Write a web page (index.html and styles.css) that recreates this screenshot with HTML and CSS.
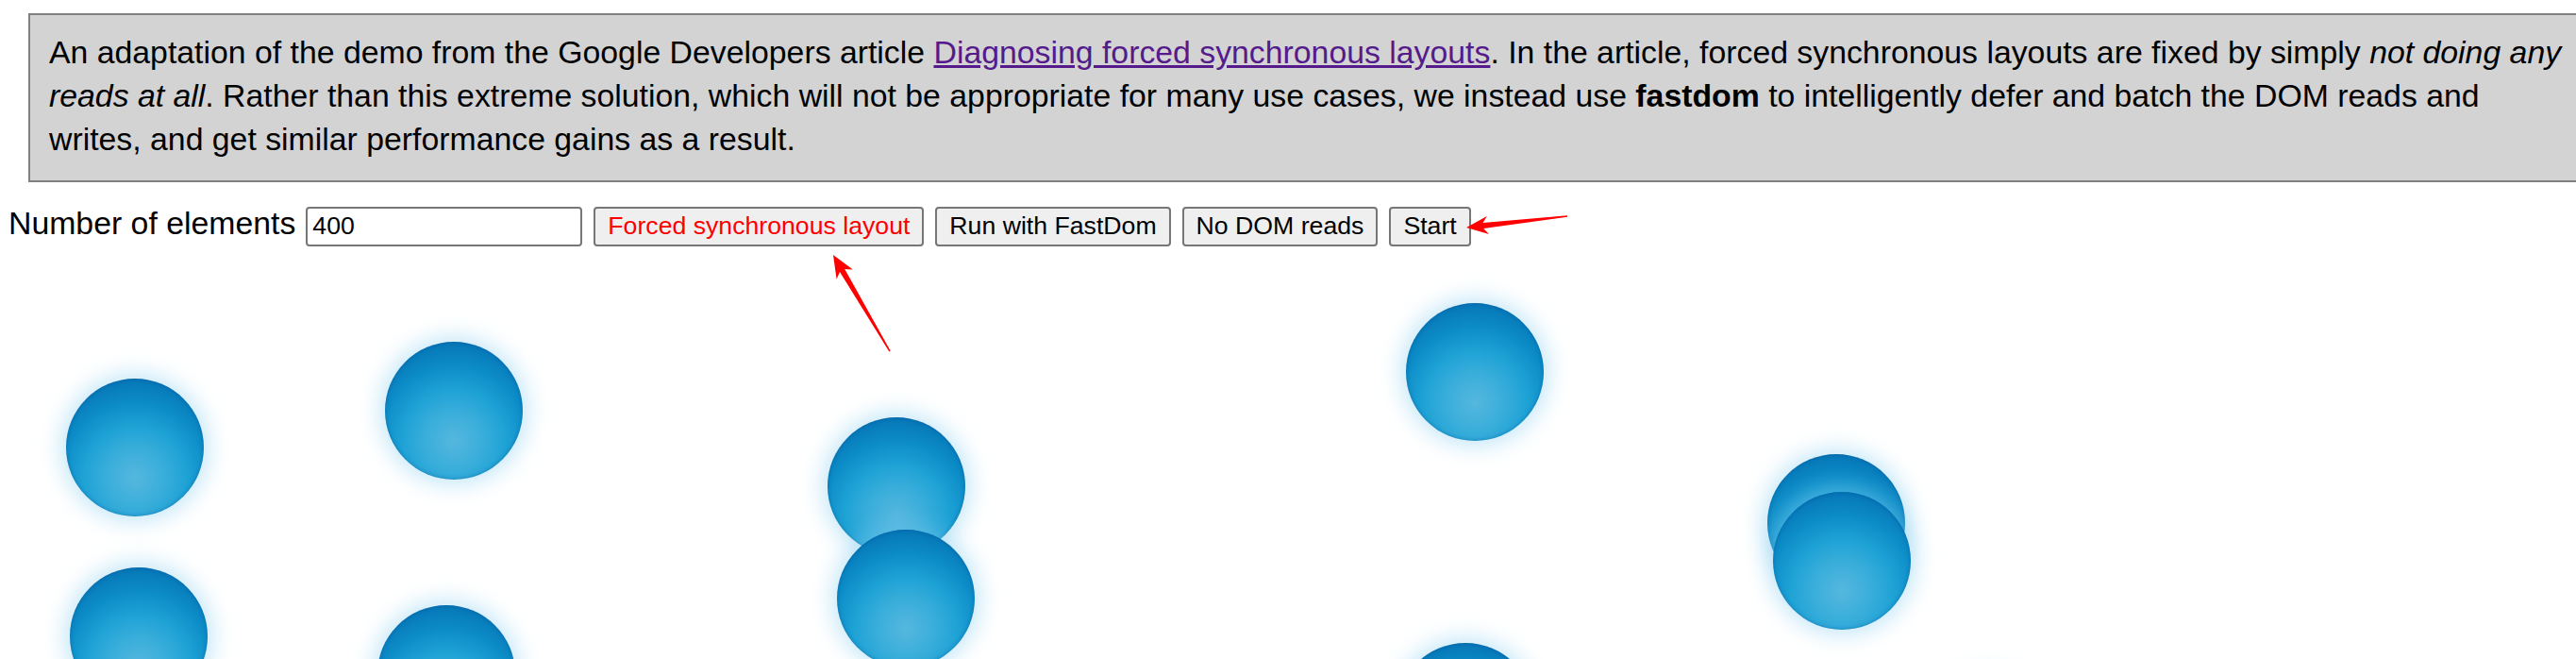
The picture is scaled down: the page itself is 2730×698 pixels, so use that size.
FILE: index.html
```html
<!DOCTYPE html>
<html lang="en">
<head>
<meta charset="utf-8">
<title>FastDom animation demo</title>
<link rel="stylesheet" href="styles.css">
</head>
<body>
<div class="intro">An adaptation of the demo from the Google Developers article <a class="intro-link" href="#">Diagnosing forced synchronous layouts</a>. In the article, forced synchronous layouts are fixed by simply <em>not doing any<br>reads at all</em>. Rather than this extreme solution, which will not be appropriate for many use cases, we instead use <strong>fastdom</strong> to intelligently defer and batch the DOM reads and<br>writes, and get similar performance gains as a result.</div>

<div class="controls">
  <label class="count-label" for="count">Number of elements</label>
  <input class="count-input" id="count" type="text" value="400">
  <button class="btn btn-forced" type="button">Forced synchronous layout</button>
  <button class="btn" type="button">Run with FastDom</button>
  <button class="btn" type="button">No DOM reads</button>
  <button class="btn" type="button">Start</button>
</div>

<div class="stage">
  <div class="ball" style="left:70px;top:140px"></div>
  <div class="ball" style="left:408px;top:101px"></div>
  <div class="ball" style="left:877px;top:181px"></div>
  <div class="ball" style="left:887px;top:300px"></div>
  <div class="ball" style="left:74px;top:340px"></div>
  <div class="ball" style="left:400px;top:380px"></div>
  <div class="ball" style="left:1490px;top:60px"></div>
  <div class="ball" style="left:1873px;top:220px"></div>
  <div class="ball" style="left:1879px;top:260px"></div>
  <div class="ball" style="left:1480px;top:420px"></div>
  <div class="ball" style="left:2034px;top:457px"></div>
</div>

<svg class="annotations" width="2730" height="698" viewBox="0 0 2730 698" aria-hidden="true">
  <polygon fill="#ff0000" points="883,270 903.8,285.6 895.2,284.9 943.6,371.6 942.4,372.4 890.0,287.9 886.6,295.8"/>
  <polygon fill="#ff0000" points="1554,241 1575.8,229.0 1571.6,236.0 1660.9,228.3 1661.1,229.7 1572.2,242.0 1577.9,247.9"/>
</svg>
</body>
</html>
```

FILE: styles.css
```css
html,
body {
  margin: 0;
  padding: 0;
  overflow: hidden;
  background: #ffffff;
}

body {
  position: relative;
  width: 2730px;
  height: 698px;
  font-family: "Liberation Sans", Arial, Helvetica, sans-serif;
  color: #000000;
}

.intro {
  box-sizing: content-box;
  width: 2700px;
  margin: 14px 0 0 30px;
  padding: 16px 20px 21px;
  border: 2px solid #808080;
  background: #d3d3d3;
  font-size: 33.8px;
  line-height: 46px;
  white-space: nowrap;
}

.intro-link {
  color: #551a8b;
  text-decoration: underline;
}

.controls {
  display: flex;
  align-items: baseline;
  gap: 12px;
  margin-top: 24px;
  padding-left: 9px;
}

.count-label {
  font-size: 33.8px;
  margin-right: -1px;
}

.count-input {
  box-sizing: border-box;
  width: 293px;
  height: 42px;
  margin: 0;
  padding: 0 5px;
  border: 2px solid #767676;
  border-radius: 4px;
  background: #ffffff;
  font-family: "Liberation Sans", Arial, sans-serif;
  font-size: 26.67px;
  color: #000000;
}

.btn {
  box-sizing: border-box;
  height: 42px;
  margin: 0;
  padding: 0 13px;
  border: 2px solid #767676;
  border-radius: 4px;
  background: #efefef;
  font-family: "Liberation Sans", Arial, sans-serif;
  font-size: 26.67px;
  color: #000000;
}

.btn-forced {
  color: #ff0000;
}

.stage {
  position: relative;
  height: 439px;
  overflow: hidden;
}

.ball {
  position: absolute;
  width: 146px;
  height: 146px;
  border-radius: 50%;
  background: radial-gradient(circle 110px at 50% 72%, #55b7de 0px, #3aaedb 30px, #1ea2d5 55px, #0c8cc7 80px, #0676b7 105px);
  box-shadow: 0 0 22px 6px rgba(130, 205, 240, 0.45), inset 0 0 4px rgba(0, 70, 140, 0.45);
}

.annotations {
  position: absolute;
  top: 0;
  left: 0;
  pointer-events: none;
}
```
